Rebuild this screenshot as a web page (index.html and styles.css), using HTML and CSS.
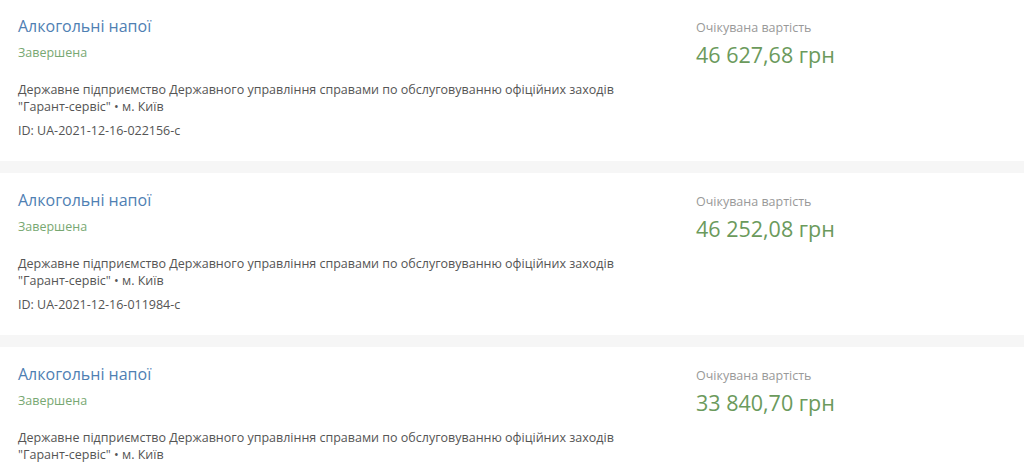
FILE: index.html
```html
<!DOCTYPE html>
<html lang="uk">
<head>
  <meta charset="UTF-8">
  <meta name="viewport" content="width=device-width, initial-scale=1.0">
  <link rel="stylesheet" href="styles.css">
  <title>Закупівлі</title>
</head>
<body>
  <div class="list">
    <div class="tender">
      <div class="info">
        <a class="title" href="#">Алкогольні напої</a>
        <div class="status">Завершена</div>
        <div class="buyer">Державне підприємство Державного управління справами по обслуговуванню офіційних заходів<br>"Гарант-сервіс" • м. Київ</div>
        <div class="tender-id">ID: UA-2021-12-16-022156-c</div>
      </div>
      <div class="value">
        <div class="value-label">Очікувана вартість</div>
        <div class="value-amount">46 627,68 грн</div>
      </div>
    </div>
    <div class="tender">
      <div class="info">
        <a class="title" href="#">Алкогольні напої</a>
        <div class="status">Завершена</div>
        <div class="buyer">Державне підприємство Державного управління справами по обслуговуванню офіційних заходів<br>"Гарант-сервіс" • м. Київ</div>
        <div class="tender-id">ID: UA-2021-12-16-011984-c</div>
      </div>
      <div class="value">
        <div class="value-label">Очікувана вартість</div>
        <div class="value-amount">46 252,08 грн</div>
      </div>
    </div>
    <div class="tender">
      <div class="info">
        <a class="title" href="#">Алкогольні напої</a>
        <div class="status">Завершена</div>
        <div class="buyer">Державне підприємство Державного управління справами по обслуговуванню офіційних заходів<br>"Гарант-сервіс" • м. Київ</div>
        <div class="tender-id">ID: UA-2021-12-16-009871-c</div>
      </div>
      <div class="value">
        <div class="value-label">Очікувана вартість</div>
        <div class="value-amount">33 840,70 грн</div>
      </div>
    </div>
  </div>
</body>
</html>
```

FILE: styles.css
```css
body {
  margin: 0;
  font-family: 'Open Sans', 'Noto Sans', sans-serif;
  background-color: #f6f6f6;
  color: #555;
  height: 464px;
  overflow: hidden;
}

.list {
  display: flex;
  flex-direction: column;
  gap: 12px;
  margin-top: -1px;
}

.tender {
  display: grid;
  grid-template-columns: 1fr 310px;
  background-color: #fff;
  padding: 0 18px 0 18px;
  height: 162px;
  box-sizing: border-box;
}

.info {
  padding-top: 16px;
}

.title {
  display: block;
  font-size: 16px;
  line-height: 22px;
  color: #4f80b3;
  text-decoration: none;
}

.status {
  margin-top: 7px;
  font-size: 12.5px;
  line-height: 18px;
  color: #78a872;
}

.buyer {
  margin-top: 19px;
  font-size: 12.5px;
  line-height: 17px;
  color: #555;
}

.tender-id {
  margin-top: 7px;
  font-size: 12.5px;
  line-height: 18px;
  color: #555;
}

.value {
  padding-top: 20px;
}

.value-label {
  font-size: 12.5px;
  line-height: 18px;
  color: #999;
}

.value-amount {
  margin-top: 3px;
  font-size: 21.5px;
  line-height: 29px;
  color: #6b9a5c;
}
```
